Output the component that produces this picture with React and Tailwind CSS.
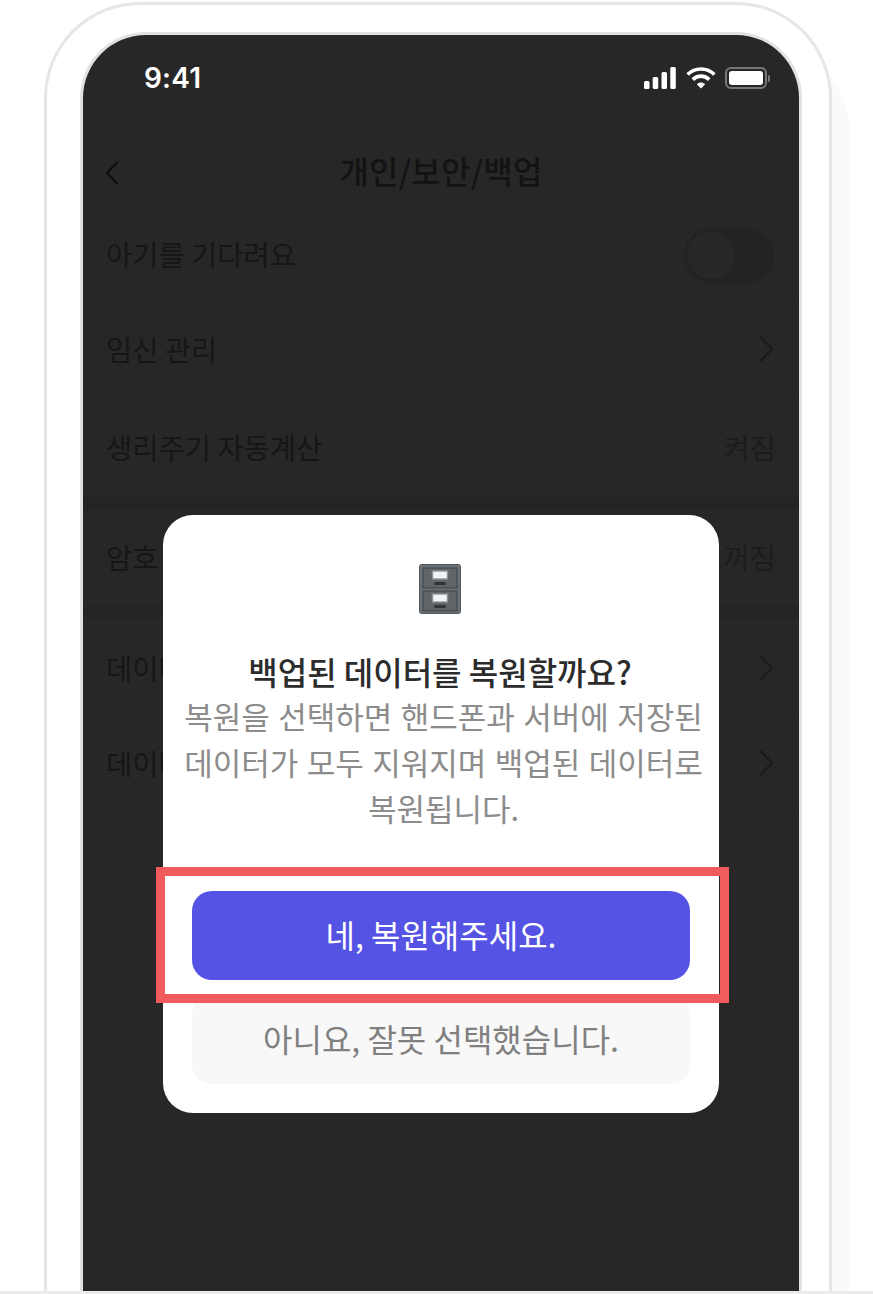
const kr = '[font-family:"Noto_Sans_CJK_KR","Noto_Sans",sans-serif]'

function Chevron() {
    return (
        <svg width="16" height="28" viewBox="0 0 16 28" fill="none" stroke="#1a1a1a" strokeWidth="2">
            <path d="M2 1.5 L14 14 L2 26.5" />
        </svg>
    )
}

function Row({ label, right, last }) {
    return (
        <div className={`h-[95px] ml-[23px] pr-[25px] flex items-center justify-between ${last ? '' : 'border-b border-[#232323]'}`}>
            <span className="text-[28.5px] text-[#161616]">{label}</span>
            {right}
        </div>
    )
}

function StatusIcons() {
    return (
        <div className="flex items-center">
            <svg width="32" height="22" viewBox="0 0 32 22" fill="#fff">
                <rect x="0" y="14" width="5.5" height="8" rx="1.5" />
                <rect x="8.7" y="10" width="5.5" height="12" rx="1.5" />
                <rect x="17.5" y="5" width="5.5" height="17" rx="1.5" />
                <rect x="26.3" y="0" width="5.5" height="22" rx="1.5" />
            </svg>
            <svg className="ml-[10px]" width="30" height="22" viewBox="0 0 30 22" fill="none" stroke="#fff" strokeWidth="3.6">
                <path d="M1.6 7.6 C9 0.2 21 0.2 28.4 7.6" />
                <path d="M6.8 12.6 C11.5 8 18.5 8 23.2 12.6" />
                <path d="M15 21.5 L10.8 17.2 C13 15 17 15 19.2 17.2 Z" fill="#fff" stroke="none" />
            </svg>
            <div className="ml-[9px] flex items-center gap-[1px]">
                <div className="w-[42px] h-[22px] rounded-[6px] border-2 border-[#777] p-[2px]">
                    <div className="w-full h-full rounded-[3px] bg-white" />
                </div>
                <div className="w-[2px] h-[7px] rounded-r-full bg-[#777]" />
            </div>
        </div>
    )
}

function CabinetIcon() {
    const drawer = (y) => (
        <g>
            <rect x="4" y={y} width="34" height="20" fill="#5f6468" stroke="#3f4347" strokeWidth="1" />
            <rect x="13.5" y={y + 3} width="15" height="8" fill="#f1f3f4" stroke="#8d9296" strokeWidth="1.4" />
            <rect x="15" y={y + 14} width="12" height="3" rx="1.5" fill="#303437" />
        </g>
    )
    return (
        <svg className="-ml-[2px]" width="42" height="50" viewBox="0 0 42 50">
            <rect x="0.5" y="0.5" width="41" height="49" rx="2" fill="#6b7074" stroke="#54585c" />
            {drawer(4)}
            {drawer(27)}
        </svg>
    )
}

function App() {
    return (
        <div className={`relative h-[1294px] overflow-hidden bg-white border-b-[3px] border-[#ececec] pt-[2px] pl-[44px] ${kr}`}>
            <div className="w-[788px] h-[1289px] box-border border-[3px] border-b-0 border-[#e6e6e6] rounded-t-[96px] bg-white pt-[27px] pl-[33px] shadow-[18px_36px_0_0_#fafafa]">
                <div className="relative w-[722px] h-[1262px] box-border border-[3px] border-b-2 border-[#e2e2e2] rounded-t-[66px] bg-[#272727] overflow-hidden">
                    {/* Status bar */}
                    <div className="h-[88px] pt-[29px] pl-[61px] pr-[29px] flex items-start justify-between">
                        <span className="font-['Inter'] text-[28px] leading-[28px] font-semibold text-white tracking-[0.2px]">9:41</span>
                        <div className="pt-[3px]">
                            <StatusIcons />
                        </div>
                    </div>

                    {/* Header */}
                    <div className="relative h-[84px] pt-[10px] flex items-center justify-center">
                        <div className="absolute left-[22px] top-[38px]">
                            <svg width="14" height="24" viewBox="0 0 14 24" fill="none" stroke="#0f0f0f" strokeWidth="2.4">
                                <path d="M12.5 1 L2 12 L12.5 23" />
                            </svg>
                        </div>
                        <span className="text-[32px] font-medium text-[#131313] tracking-[0.2px]">개인/보안/백업</span>
                    </div>

                    {/* Settings */}
                    <Row
                        label="아기를 기다려요"
                        right={
                            <div className="w-[90px] h-[55px] rounded-full bg-[#232323] p-[2px] mt-[2px]">
                                <div className="w-[50px] h-[50px] rounded-full bg-[#272727] border border-[#222]" />
                            </div>
                        }
                    />
                    <Row label="임신 관리" right={<Chevron />} />
                    <div className="h-[100px] ml-[23px] pr-[25px] flex items-center justify-between">
                        <span className="text-[28.5px] text-[#161616]">생리주기 자동계산</span>
                        <span className="-mr-[2px] text-[28.5px] text-[#1c1c1c]">켜짐</span>
                    </div>
                    <div className="h-[13px] bg-[#242424]" />
                    <Row label="암호 설정" last right={<span className="-mr-[2px] text-[28.5px] text-[#1c1c1c]">꺼짐</span>} />
                    <div className="h-[13px] bg-[#242424]" />
                    <div className="h-[98px] pt-[3px] ml-[23px] pr-[25px] flex items-center justify-between border-b border-[#232323]">
                        <span className="text-[28.5px] text-[#161616]">데이터 백업</span>
                        <Chevron />
                    </div>
                    <Row label="데이터 복원" right={<Chevron />} />

                    {/* Dialog */}
                    <div className="absolute left-[80px] top-[480px] w-[556px] h-[598px] rounded-[30px] bg-white flex flex-col items-center pt-[49px]">
                        <CabinetIcon />
                        <div className="mt-[36px] -ml-[2px] text-[32px] leading-[43px] font-medium text-[#2c2c2c]">백업된 데이터를 복원할까요?</div>
                        <div className="ml-[5px] text-[31px] leading-[46px] text-[#8c8c8c] text-center whitespace-nowrap [word-spacing:1.5px]">
                            복원을 선택하면 핸드폰과 서버에 저장된<br />
                            데이터가 모두 지워지며 백업된 데이터로<br />
                            복원됩니다.
                        </div>
                        <button className="mt-[60px] w-[498px] h-[89px] pb-[3px] rounded-[20px] bg-[#5553e3] text-white text-[32px]">네, 복원해주세요.</button>
                        <button className="mt-[15px] w-[498px] h-[89px] pb-[3px] rounded-[20px] bg-[#f8f8f8] text-[#808080] text-[32px]">아니요, 잘못 선택했습니다.</button>
                    </div>
                </div>
            </div>

            {/* Highlight box */}
            <div className="absolute left-[156px] top-[867px] w-[573px] h-[136px] border-[9px] border-[#f25b5d]" />
        </div>
    )
}

export default App
